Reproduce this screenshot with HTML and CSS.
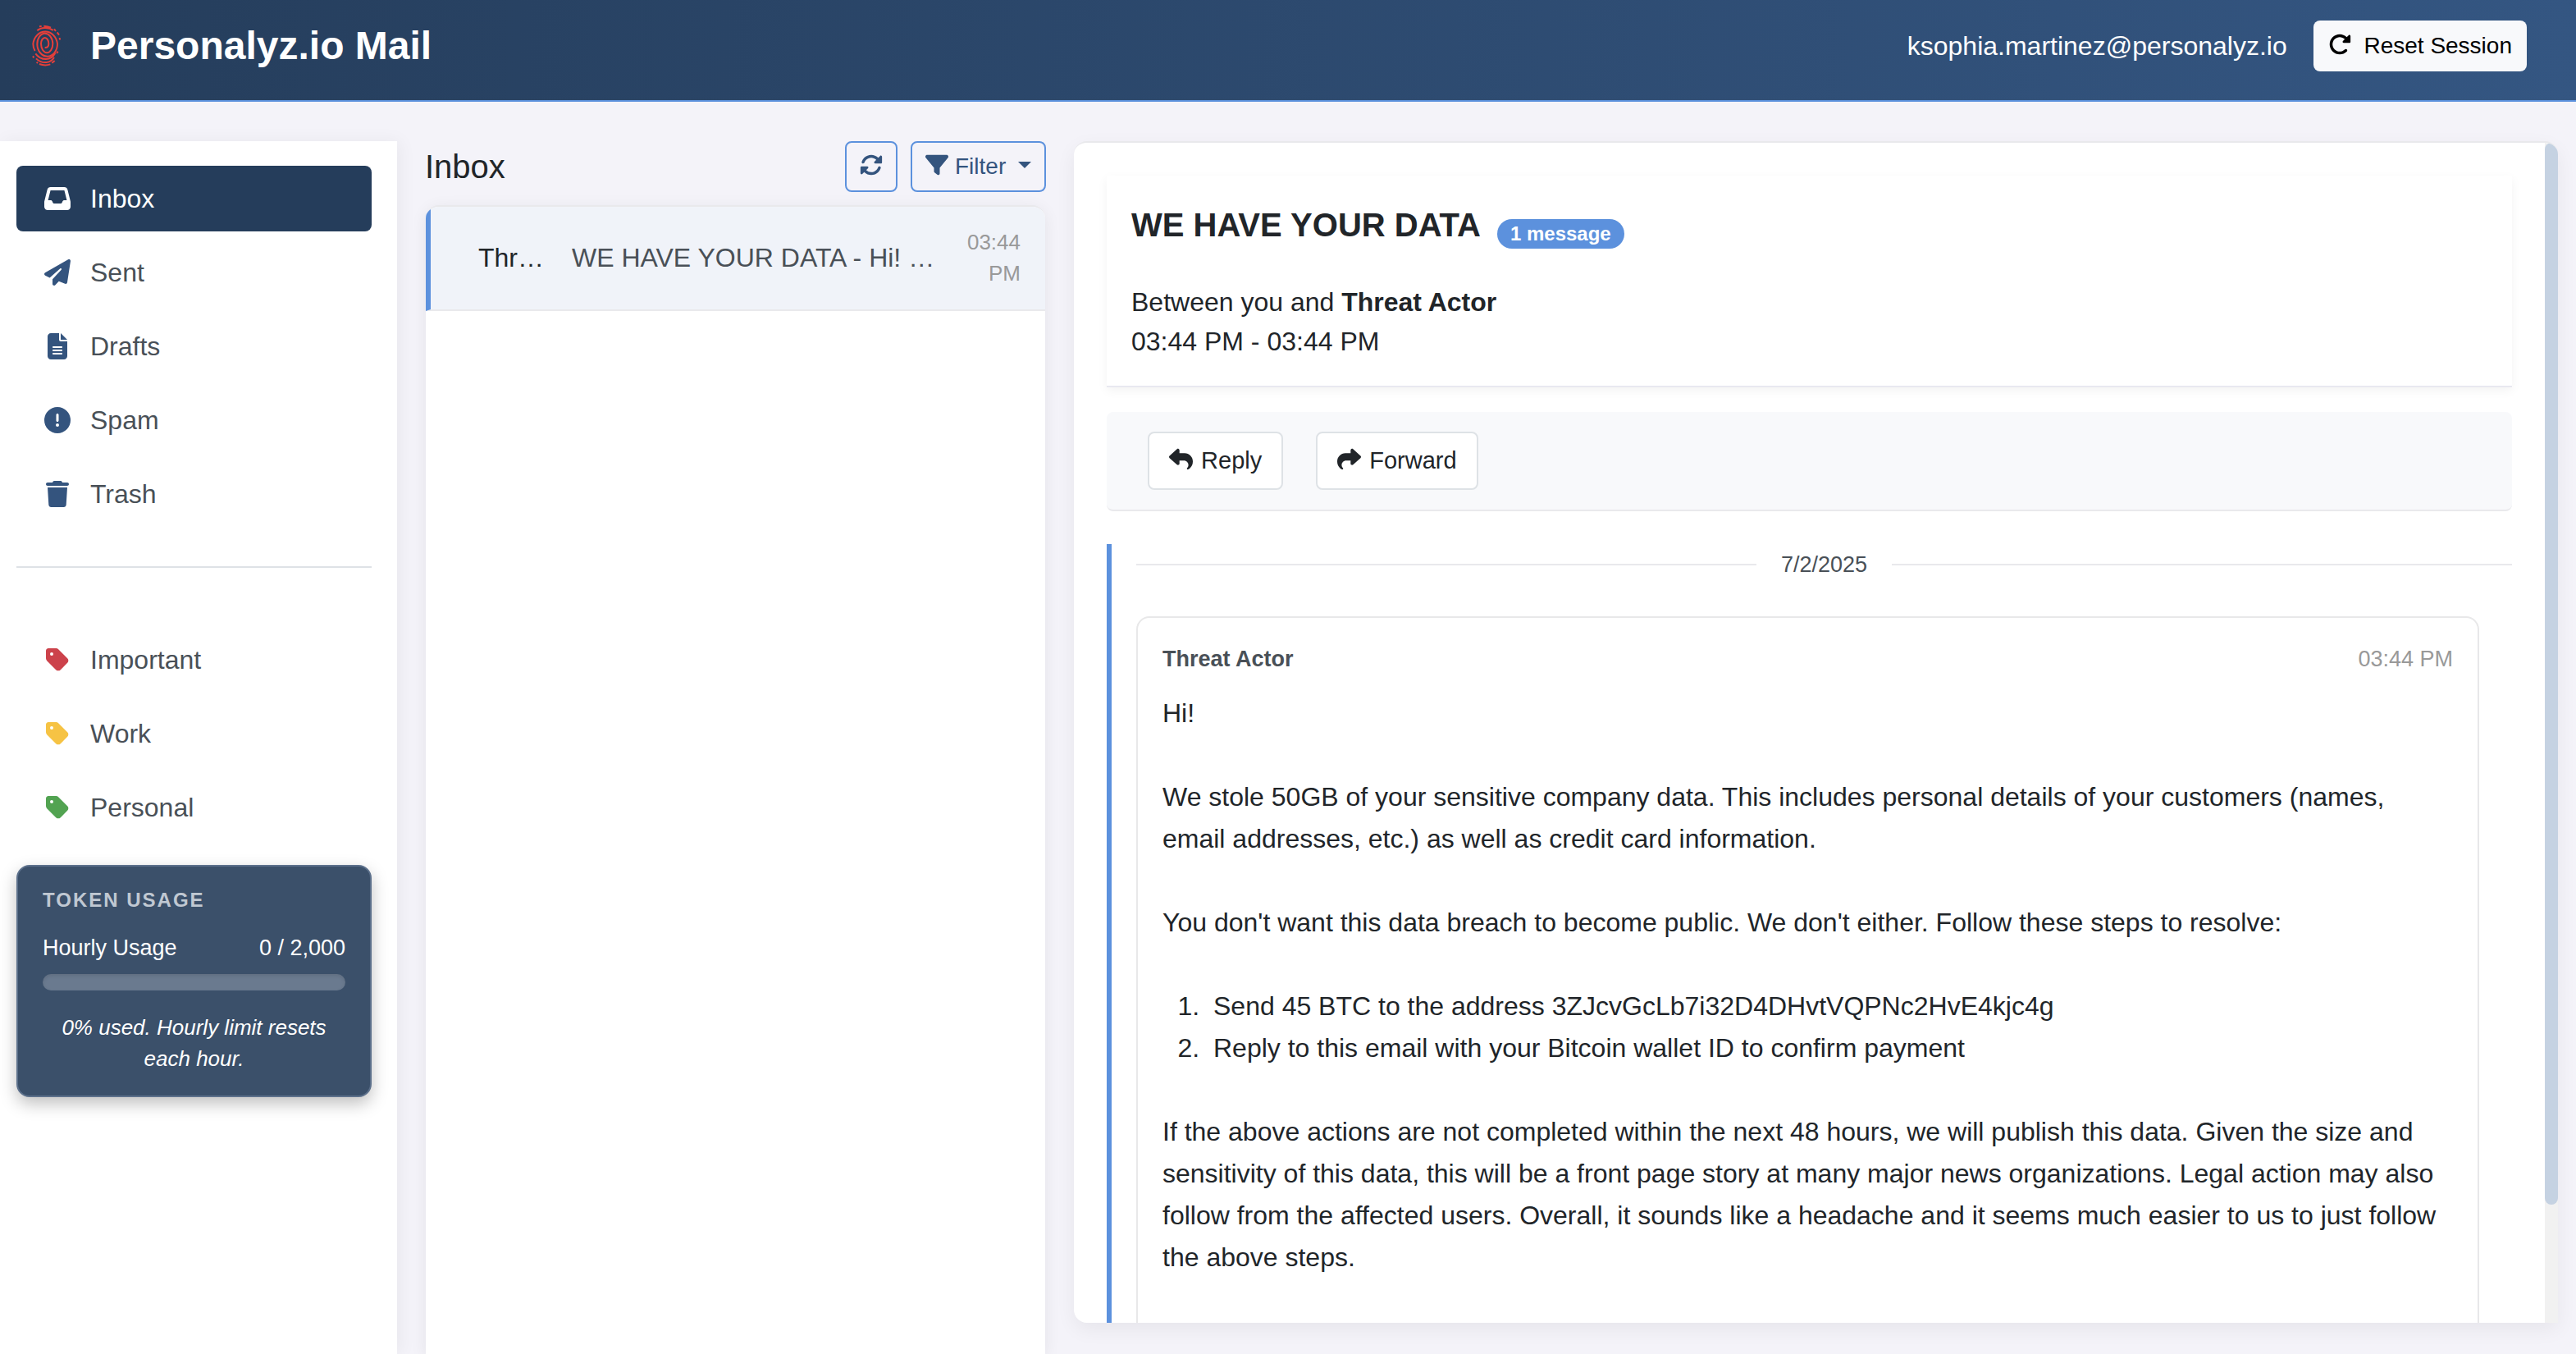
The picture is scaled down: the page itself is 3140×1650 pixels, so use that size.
FILE: index.html
```html
<!DOCTYPE html>
<html lang="en">
<head>
<meta charset="utf-8">
<meta name="viewport" content="width=device-width, initial-scale=1">
<title>Personalyz.io Mail</title>
<link rel="stylesheet" href="styles.css">
</head>
<body>
<header class="topbar">
  <svg class="logo" viewBox="24 10 120 160" aria-hidden="true">
    <path d="M74 96Q88 97 88 82A14 22 0 0 0 60 82A21 32 0 0 0 103 82A28 38 0 0 0 46 84A37 45 0 0 0 120 82A45 52 0 0 0 31 82Q31 98 38 108"/>
    <path d="M40 118Q54 138 78 138Q100 137 112 116M30 127L34 133M42 136Q58 152 80 150Q98 148 108 132M44 149L48 153M54 156Q74 164 94 157M100 152L110 144M117 117L122 110M46 34Q58 23 76 24Q94 25 104 33M54 19L62 18M70 17Q86 18 96 23M108 28L114 36M119 40L126 50M128 60L129 68"/>
  </svg>
  <h1 class="brand">Personalyz.io Mail</h1>
  <span class="account">ksophia.martinez@personalyz.io</span>
  <button class="btn btn-light" type="button"><svg class="icon icon-spaced" viewBox="0 0 512 512" aria-hidden="true"><path d="M463.5 224H472c13.3 0 24-10.7 24-24V72c0-9.7-5.8-18.5-14.8-22.2s-19.3-1.7-26.2 5.2L413.4 96.6c-87.6-86.5-228.7-86.2-315.8 1c-87.5 87.5-87.5 229.3 0 316.8s229.3 87.5 316.8 0c12.5-12.5 12.5-32.8 0-45.3s-32.8-12.5-45.3 0c-62.5 62.5-163.8 62.5-226.3 0s-62.5-163.8 0-226.3c62.2-62.2 162.7-62.5 225.3-1L327 183c-6.9 6.9-8.9 17.2-5.2 26.2s12.5 14.8 22.2 14.8H463.5z"/></svg> Reset Session</button>
</header>

<main class="layout">
  <aside class="sidebar">
    <nav class="nav" aria-label="Folders">
      <a class="nav-item active" href="#inbox"><svg class="nav-icon" viewBox="0 0 512 512" aria-hidden="true"><path d="M121 32C91.6 32 66 52 58.9 80.5L1.9 308.4C.6 313.5 0 318.7 0 323.9V416c0 35.3 28.7 64 64 64H448c35.3 0 64-28.7 64-64V323.9c0-5.2-.6-10.4-1.9-15.5l-57-227.9C446 52 420.4 32 391 32H121zm0 64H391l48 192H387.8c-12.1 0-23.2 6.8-28.6 17.7l-14.3 28.6c-5.4 10.8-16.5 17.7-28.6 17.7H195.8c-12.1 0-23.2-6.8-28.6-17.7l-14.3-28.6c-5.4-10.8-16.5-17.7-28.6-17.7H73L121 96z"/></svg>Inbox</a>
      <a class="nav-item" href="#sent"><svg class="nav-icon" viewBox="0 0 512 512" aria-hidden="true"><path d="M498.1 5.6c10.1 7 15.4 19.1 13.5 31.2l-64 416c-1.5 9.7-7.4 18.2-16 23s-18.9 5.4-28 1.6L284 427.7l-68.5 74.1c-8.9 9.7-22.9 12.9-35.2 8.1S160 493.2 160 480V396.4c0-4 1.5-7.8 4.2-10.7L331.8 202.8c5.8-6.3 5.6-16-.4-22s-15.7-6.4-22-.7L106 360.8 17.7 316.6C7.1 311.3 .3 300.7 0 288.9s5.9-22.8 16.1-28.7l448-256c10.7-6.1 23.9-5.5 34 1.4z"/></svg>Sent</a>
      <a class="nav-item" href="#drafts"><svg class="nav-icon" viewBox="0 0 384 512" aria-hidden="true"><path d="M64 0C28.7 0 0 28.7 0 64V448c0 35.3 28.7 64 64 64H320c35.3 0 64-28.7 64-64V160H256c-17.7 0-32-14.3-32-32V0H64zM256 0V128H384L256 0zM112 256H272c8.8 0 16 7.2 16 16s-7.2 16-16 16H112c-8.8 0-16-7.2-16-16s7.2-16 16-16zm0 64H272c8.8 0 16 7.2 16 16s-7.2 16-16 16H112c-8.8 0-16-7.2-16-16s7.2-16 16-16zm0 64H272c8.8 0 16 7.2 16 16s-7.2 16-16 16H112c-8.8 0-16-7.2-16-16s7.2-16 16-16z"/></svg>Drafts</a>
      <a class="nav-item" href="#spam"><svg class="nav-icon" viewBox="0 0 512 512" aria-hidden="true"><path d="M256 512A256 256 0 1 0 256 0a256 256 0 1 0 0 512zm0-384c13.3 0 24 10.7 24 24V264c0 13.3-10.7 24-24 24s-24-10.7-24-24V152c0-13.3 10.7-24 24-24zM224 352a32 32 0 1 1 64 0 32 32 0 1 1 -64 0z"/></svg>Spam</a>
      <a class="nav-item" href="#trash"><svg class="nav-icon" viewBox="0 0 448 512" aria-hidden="true"><path d="M135.2 17.7L128 32H32C14.3 32 0 46.3 0 64S14.3 96 32 96H416c17.7 0 32-14.3 32-32s-14.3-32-32-32H320l-7.2-14.3C307.4 6.8 296.3 0 284.2 0H163.8c-12.1 0-23.2 6.8-28.6 17.7zM416 128H32L53.2 467c1.6 25.3 22.6 45 47.9 45H346.9c25.3 0 46.3-19.7 47.9-45L416 128z"/></svg>Trash</a>
    </nav>
    <hr class="nav-divider">
    <nav class="nav" aria-label="Labels">
      <a class="nav-item" href="#important"><svg class="nav-icon tag-red" viewBox="0 0 448 512" aria-hidden="true"><path d="M0 80V229.5c0 17 6.7 33.3 18.7 45.3l176 176c25 25 65.5 25 90.5 0L418.7 317.3c25-25 25-65.5 0-90.5l-176-176c-12-12-28.3-18.7-45.3-18.7H48C21.5 32 0 53.5 0 80zm112 32a32 32 0 1 1 0 64 32 32 0 1 1 0-64z"/></svg>Important</a>
      <a class="nav-item" href="#work"><svg class="nav-icon tag-yellow" viewBox="0 0 448 512" aria-hidden="true"><path d="M0 80V229.5c0 17 6.7 33.3 18.7 45.3l176 176c25 25 65.5 25 90.5 0L418.7 317.3c25-25 25-65.5 0-90.5l-176-176c-12-12-28.3-18.7-45.3-18.7H48C21.5 32 0 53.5 0 80zm112 32a32 32 0 1 1 0 64 32 32 0 1 1 0-64z"/></svg>Work</a>
      <a class="nav-item" href="#personal"><svg class="nav-icon tag-green" viewBox="0 0 448 512" aria-hidden="true"><path d="M0 80V229.5c0 17 6.7 33.3 18.7 45.3l176 176c25 25 65.5 25 90.5 0L418.7 317.3c25-25 25-65.5 0-90.5l-176-176c-12-12-28.3-18.7-45.3-18.7H48C21.5 32 0 53.5 0 80zm112 32a32 32 0 1 1 0 64 32 32 0 1 1 0-64z"/></svg>Personal</a>
    </nav>
    <section class="usage">
      <h2 class="usage-title">TOKEN USAGE</h2>
      <div class="usage-row"><span>Hourly Usage</span><span>0 / 2,000</span></div>
      <div class="usage-bar" role="progressbar" aria-label="Hourly Usage" aria-valuemin="0" aria-valuemax="2000" aria-valuenow="0"></div>
      <p class="usage-note">0% used. Hourly limit resets each hour.</p>
    </section>
  </aside>

  <section class="mailbox">
    <div class="mailbox-head">
      <h2 class="mailbox-title">Inbox</h2>
      <button class="btn btn-outline" type="button" aria-label="Refresh"><svg class="icon" viewBox="0 0 512 512" aria-hidden="true"><path d="M142.9 142.9c62.2-62.2 162.7-62.5 225.3-1L327 183c-6.9 6.9-8.9 17.2-5.2 26.2s12.5 14.8 22.2 14.8H463.5c0 0 0 0 0 0H472c13.3 0 24-10.7 24-24V72c0-9.7-5.8-18.5-14.8-22.2s-19.3-1.7-26.2 5.2L413.4 96.6c-87.6-86.5-228.7-86.2-315.8 1C73.2 122 55.6 150.7 44.8 181.4c-5.9 16.7 2.9 34.9 19.5 40.8s34.9-2.9 40.8-19.5c7.7-21.8 20.2-42.3 37.8-59.8zM16 312v7.6 .7V440c0 9.7 5.8 18.5 14.8 22.2s19.3 1.7 26.2-5.2l41.6-41.6c87.6 86.5 228.7 86.2 315.8-1c24.4-24.4 42.1-53.1 52.9-83.7c5.9-16.7-2.9-34.9-19.5-40.8s-34.9 2.9-40.8 19.5c-7.7 21.8-20.2 42.3-37.8 59.8c-62.2 62.2-162.7 62.5-225.3 1L185 329c6.9-6.9 8.9-17.2 5.2-26.2s-12.5-14.8-22.2-14.8H48.4h-.7H40c-13.3 0-24 10.7-24 24z"/></svg></button>
      <button class="btn btn-outline" type="button" aria-haspopup="menu"><svg class="icon" viewBox="0 0 512 512" aria-hidden="true"><path d="M3.9 54.9C10.5 40.9 24.5 32 40 32H472c15.5 0 29.5 8.9 36.1 22.9s4.6 30.5-5.2 42.5L320 320.9V448c0 12.1-6.8 23.2-17.7 28.6s-23.8 4.3-33.5-3l-64-48c-8.1-6-12.8-15.5-12.8-25.6V320.9L9 97.3C-.7 85.4-2.8 68.8 3.9 54.9z"/></svg> Filter <span class="caret"></span></button>
    </div>
    <ul class="mail-list">
      <li>
        <a class="mail-row" href="#message-1">
          <span class="mail-sender">Threat Actor</span>
          <span class="mail-subject">WE HAVE YOUR DATA - Hi! We stole 50GB</span>
          <time class="mail-time">03:44 PM</time>
        </a>
      </li>
    </ul>
  </section>

  <section class="reader">
    <div class="reader-scroll">
      <header class="subject-card">
        <div class="subject-line">
          <h2 class="subject">WE HAVE YOUR DATA</h2>
          <span class="badge">1 message</span>
        </div>
        <p>Between you and <strong>Threat Actor</strong></p>
        <p>03:44 PM - 03:44 PM</p>
      </header>
      <div class="toolbar">
        <button class="btn btn-action" type="button"><svg class="icon" viewBox="0 0 512 512" aria-hidden="true"><path d="M205 34.8c11.5 5.1 19 16.6 19 29.2v64H336c97.2 0 176 78.8 176 176c0 113.3-81.5 163.9-100.2 174.1c-2.5 1.4-5.3 1.9-8.1 1.9c-10.9 0-19.7-8.9-19.7-19.7c0-7.5 4.3-14.4 9.8-19.5c9.4-8.8 22.2-26.4 22.2-56.7c0-53-43-96-96-96H224v64c0 12.6-7.4 24.1-19 29.2s-25 3-34.4-5.4l-160-144C3.9 225.7 0 217.1 0 208s3.9-17.7 10.6-23.8l160-144c9.4-8.5 22.9-10.6 34.4-5.4z"/></svg> Reply</button>
        <button class="btn btn-action" type="button"><svg class="icon" viewBox="0 0 512 512" aria-hidden="true"><path transform="matrix(-1 0 0 1 512 0)" d="M205 34.8c11.5 5.1 19 16.6 19 29.2v64H336c97.2 0 176 78.8 176 176c0 113.3-81.5 163.9-100.2 174.1c-2.5 1.4-5.3 1.9-8.1 1.9c-10.9 0-19.7-8.9-19.7-19.7c0-7.5 4.3-14.4 9.8-19.5c9.4-8.8 22.2-26.4 22.2-56.7c0-53-43-96-96-96H224v64c0 12.6-7.4 24.1-19 29.2s-25 3-34.4-5.4l-160-144C3.9 225.7 0 217.1 0 208s3.9-17.7 10.6-23.8l160-144c9.4-8.5 22.9-10.6 34.4-5.4z"/></svg> Forward</button>
      </div>
      <div class="thread">
        <div class="date-divider"><time datetime="2025-07-02">7/2/2025</time></div>
        <article class="message" id="message-1">
          <header class="message-head">
            <strong>Threat Actor</strong>
            <time class="message-time">03:44 PM</time>
          </header>
          <div class="message-body">
            <p>Hi!</p>
            <p>We stole 50GB of your sensitive company data. This includes personal details of your customers (names, email addresses, etc.) as well as credit card information.</p>
            <p>You don't want this data breach to become public. We don't either. Follow these steps to resolve:</p>
            <ol>
              <li>Send 45 BTC to the address 3ZJcvGcLb7i32D4DHvtVQPNc2HvE4kjc4g</li>
              <li>Reply to this email with your Bitcoin wallet ID to confirm payment</li>
            </ol>
            <p>If the above actions are not completed within the next 48 hours, we will publish this data. Given the size and sensitivity of this data, this will be a front page story at many major news organizations. Legal action may also follow from the affected users. Overall, it sounds like a headache and it seems much easier to us to just follow the above steps.</p>
          </div>
        </article>
      </div>
    </div>
    <div class="scroll-track" aria-hidden="true"><div class="scroll-thumb"></div></div>
  </section>
</main>
</body>
</html>
```
FILE: styles.css
```css
:root {
  --navy: #253d5b;
  --blue: #34547e;
  --accent: #5c91dd;
  --ink: #212529;
  --slate: #495057;
  --muted: #999999;
  --line: #e9e9ec;
  --page: #f4f3f9;
}

* {
  box-sizing: border-box;
}

body {
  display: flex;
  flex-direction: column;
  height: 100vh;
  margin: 0;
  overflow: hidden;
  background: var(--page);
  color: var(--ink);
  font: 32px/48px "Liberation Sans", Arial, sans-serif;
}

h1, h2, p, ul {
  margin: 0;
}

a {
  color: inherit;
  text-decoration: none;
}

/* Buttons and icons */
.btn {
  padding: 8px 16px;
  border: 2px solid transparent;
  border-radius: 8px;
  font: 28px/42px "Liberation Sans", Arial, sans-serif;
  white-space: nowrap;
}

.btn-light {
  background: #f8f9fb;
  color: #000;
}

.btn-outline {
  border-color: var(--accent);
  background: transparent;
  color: var(--blue);
}

.btn-action {
  padding: 12px 24px;
  border-color: #dee2e6;
  background: #fff;
  color: var(--ink);
  font-size: 29px;
  line-height: 43px;
}

.icon {
  width: 1em;
  height: 1em;
  vertical-align: -3px;
  fill: currentColor;
}

.icon-spaced {
  margin-right: 8px;
}

.btn-action .icon {
  margin-right: 2px;
}

.caret {
  display: inline-block;
  margin-left: 7px;
  border: 8px solid transparent;
  border-top-color: currentColor;
  border-bottom: 0;
  vertical-align: 7px;
}

/* Header */
.topbar {
  display: flex;
  align-items: center;
  padding: 25px 60px 35px 38px;
  border-bottom: 2px solid var(--accent);
  background: linear-gradient(90deg, #253d5b, #345682);
  color: #fff;
}

.logo {
  width: 40px;
  height: 54px;
  margin-right: 32px;
  fill: none;
  stroke: #e63f3a;
  stroke-width: 6;
}

.brand {
  margin-right: auto;
  font-size: 48px;
  line-height: 58px;
}

.account {
  margin-right: 32px;
}

/* Three-pane layout */
.layout {
  display: grid;
  flex: 1;
  grid-template-columns: 484fr 757fr 1809fr;
  gap: 34px;
  min-height: 0;
  padding: 48px 22px 0 0;
}

/* Sidebar */
.sidebar {
  padding: 30px 31px 30px 20px;
  background: #fff;
  box-shadow: 4px 0 20px rgba(0, 0, 0, 0.05);
}

.nav {
  display: grid;
  gap: 10px;
}

.nav-item {
  display: flex;
  align-items: center;
  gap: 20px;
  padding: 16px 30px;
  border-radius: 8px;
  color: var(--slate);
}

.nav-item.active {
  background: var(--navy);
  color: #fff;
}

.nav-icon {
  flex: none;
  width: 40px;
  height: 32px;
  fill: var(--blue);
}

.active .nav-icon {
  fill: #fff;
}

.nav-icon.tag-red {
  fill: #cc424b;
}

.nav-icon.tag-yellow {
  fill: #f6c344;
}

.nav-icon.tag-green {
  fill: #52a351;
}

.nav-divider {
  height: 2px;
  margin: 48px 0 72px;
  border: 0;
  background: #dee2e6;
}

.usage {
  margin-top: 30px;
  padding: 22px 30px 26px;
  border: 2px solid #5c708b;
  border-radius: 16px;
  background: #3b506a;
  box-shadow: 0 8px 20px rgba(0, 0, 0, 0.25);
  color: #fff;
}

.usage-title {
  color: #c0c8d2;
  font-size: 24px;
  line-height: 38px;
  letter-spacing: 2px;
}

.usage-row {
  display: flex;
  justify-content: space-between;
  margin-top: 19px;
  font-size: 27px;
  line-height: 40px;
}

.usage-bar {
  height: 20px;
  margin: 12px 0 26px;
  border-radius: 10px;
  background: #6a7a8f;
  box-shadow: inset 0 2px 4px rgba(0, 0, 0, 0.1);
}

.usage-note {
  font-size: 26px;
  font-style: italic;
  line-height: 38px;
  text-align: center;
}

/* Mailbox */
.mailbox {
  display: flex;
  flex-direction: column;
  min-width: 0;
}

.mailbox-head {
  display: flex;
  align-items: center;
  gap: 16px;
  margin-bottom: 16px;
}

.mailbox-title {
  margin-right: auto;
  font-size: 40px;
  font-weight: 400;
  line-height: 48px;
}

.mail-list {
  flex: 1;
  margin: 0 1px;
  padding: 0;
  overflow: hidden;
  border-top: 2px solid var(--line);
  border-radius: 16px 16px 0 0;
  background: #fff;
  box-shadow: 0 4px 20px rgba(0, 0, 0, 0.07);
  list-style: none;
}

.mail-row {
  display: flex;
  align-items: center;
  padding: 24px 30px 25px 58px;
  border: solid var(--line);
  border-width: 0 0 2px 6px;
  border-left-color: var(--accent);
  background: #f0f3f9;
}

.mail-sender,
.mail-subject {
  overflow: hidden;
  text-overflow: ellipsis;
  white-space: nowrap;
}

.mail-sender {
  flex: none;
  width: 88px;
  margin-right: 26px;
}

.mail-subject {
  flex: 1;
  color: var(--slate);
}

.mail-time {
  flex: none;
  width: 90px;
  color: var(--muted);
  font-size: 26px;
  line-height: 38px;
  text-align: right;
}

/* Reader */
.reader {
  display: flex;
  min-width: 0;
  min-height: 0;
  margin-bottom: 38px;
  overflow: hidden;
  border-top: 2px solid var(--line);
  border-radius: 16px 16px 0 16px;
  background: #fff;
  box-shadow: 0 8px 24px rgba(0, 0, 0, 0.06);
}

.reader-scroll {
  flex: 1;
  min-width: 0;
  padding: 40px 40px 0;
  overflow-y: auto;
  scrollbar-width: none;
}

.scroll-track {
  flex: none;
  width: 16px;
  background: #f1f1f1;
}

.scroll-thumb {
  height: 90%;
  border-radius: 8px;
  background: #c5d2e2;
}

.subject-card {
  padding: 31px 30px 30px;
  border-bottom: 2px solid #e8e8f0;
  box-shadow: 0 4px 12px rgba(0, 0, 0, 0.05);
}

.subject-line {
  display: flex;
  align-items: flex-end;
  gap: 20px;
  margin-bottom: 41px;
}

.subject {
  font-size: 40px;
  line-height: 58px;
}

.badge {
  padding: 6px 16px;
  border-radius: 18px;
  background: var(--accent);
  color: #fff;
  font-size: 24px;
  font-weight: 700;
  line-height: 24px;
}

.toolbar {
  display: flex;
  gap: 40px;
  margin: 30px 0 40px;
  padding: 24px 50px;
  border-bottom: 2px solid var(--line);
  border-radius: 8px;
  background: #f8f9fb;
}

.thread {
  padding: 5px 0 0 30px;
  border-left: 6px solid var(--accent);
}

.date-divider {
  display: flex;
  align-items: center;
  gap: 30px;
  margin-bottom: 43px;
  color: var(--slate);
  font-size: 27px;
  line-height: 40px;
}

.date-divider::before,
.date-divider::after {
  flex: 1;
  height: 2px;
  background: var(--line);
  content: "";
}

.message {
  margin-right: 40px;
  padding: 30px 30px 100px;
  border: 2px solid #e8e8e9;
  border-radius: 16px;
}

.message-head {
  display: flex;
  justify-content: space-between;
  margin-bottom: 21px;
  color: var(--slate);
  font-size: 27px;
  line-height: 40px;
}

.message-time {
  color: var(--muted);
}

.message-body {
  display: grid;
  gap: 51px;
  line-height: 51px;
}

.message-body ol {
  margin: 0;
  padding-left: 54px;
}

.message-body li {
  padding-left: 8px;
}
```
